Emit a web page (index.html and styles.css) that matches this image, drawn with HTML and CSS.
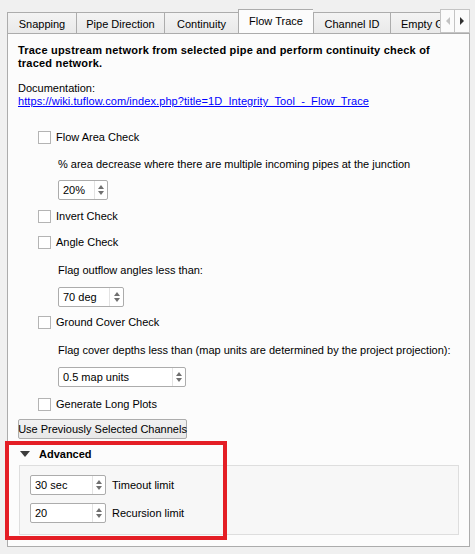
FILE: index.html
```html
<!DOCTYPE html>
<html>
<head>
<meta charset="utf-8">
<link rel="stylesheet" href="styles.css">
</head>
<body>
<div class="window">
  <div class="tabbar">
    <div class="tabs">
      <div class="tab">Snapping</div>
      <div class="tab">Pipe Direction</div>
      <div class="tab">Continuity</div>
      <div class="tab active">Flow Trace</div>
      <div class="tab">Channel ID</div>
      <div class="tab tab-last">Empty Geometry</div>
    </div>
    <div class="scroll-btns">
      <div class="sbtn"><span class="arr-left"></span></div>
      <div class="sbtn"><span class="arr-right"></span></div>
    </div>
  </div>
  <div class="panel">
    <div class="title">Trace upstream network from selected pipe and perform continuity check of traced network.</div>
    <div class="doc">
      <div>Documentation:</div>
      <a href="#">https://wiki.tuflow.com/index.php?title=1D_Integrity_Tool_-_Flow_Trace</a>
    </div>
    <div class="options">
      <div class="check mt19"><span class="box"></span><span>Flow Area Check</span></div>
      <div class="note mt10">% area decrease where there are multiple incoming pipes at the junction</div>
      <div class="spin w-pct mt9"><span class="val">20%</span><span class="btns"><span class="up"></span><span class="down"></span></span></div>
      <div class="check mt6"><span class="box"></span><span>Invert Check</span></div>
      <div class="check mt6"><span class="box"></span><span>Angle Check</span></div>
      <div class="note mt11">Flag outflow angles less than:</div>
      <div class="spin w-deg mt10"><span class="val">70 deg</span><span class="btns wide"><span class="up"></span><span class="down"></span></span></div>
      <div class="check mt5"><span class="box"></span><span>Ground Cover Check</span></div>
      <div class="note mt11">Flag cover depths less than (map units are determined by the project projection):</div>
      <div class="spin w-map mt10"><span class="val">0.5 map units</span><span class="btns"><span class="up"></span><span class="down"></span></span></div>
      <div class="check mt7"><span class="box"></span><span>Generate Long Plots</span></div>
    </div>
    <div class="button">Use Previously Selected Channels</div>
    <div class="adv-header"><span class="tri"></span><span class="adv-title">Advanced</span></div>
    <div class="group">
      <div class="limit-row">
        <div class="spin w-lim"><span class="val">30 sec</span><span class="btns"><span class="up"></span><span class="down"></span></span></div>
        <span>Timeout limit</span>
      </div>
      <div class="limit-row mt8">
        <div class="spin w-lim"><span class="val">20</span><span class="btns"><span class="up"></span><span class="down"></span></span></div>
        <span>Recursion limit</span>
      </div>
    </div>
  </div>
  <div class="highlight"></div>
</div>
</body>
</html>
```
FILE: styles.css
```css
html, body {
  margin: 0;
  padding: 0;
}
body {
  background: #f0f0f0;
  font-family: "Liberation Sans", Arial, sans-serif;
  font-size: 11px;
  line-height: 13px;
  color: #000;
  width: 475px;
  height: 554px;
  overflow: hidden;
}
.window {
  position: relative;
  padding: 9px 0 0 7px;
}
.tabbar {
  display: flex;
  height: 24px;
  width: 464px;
  position: relative;
  z-index: 2;
}
.tabs {
  display: grid;
  grid-template-columns: 69px 88px 74px 75px 77px 90px;
  align-items: end;
  width: 433px;
  overflow: hidden;
}
.tab {
  height: 21px;
  box-sizing: border-box;
  border-top: 1px solid #acacac;
  border-left: 1px solid #acacac;
  background: linear-gradient(#f3f3f3, #e9e9e9);
  display: flex;
  justify-content: center;
  align-items: center;
  padding-top: 2px;
  white-space: nowrap;
  overflow: hidden;
}
.tab-last {
  justify-content: flex-start;
  padding-left: 10px;
  border-right: 1px solid #acacac;
}
.tab.active {
  height: 25px;
  margin-bottom: -1px;
  background: #fcfcfc;
  padding-top: 0;
  padding-bottom: 2px;
}
.scroll-btns {
  display: flex;
  height: 24px;
}
.sbtn {
  width: 15px;
  height: 24px;
  box-sizing: border-box;
  border: 1px solid #c4c4c4;
  background: #fbfbfb;
  display: flex;
  align-items: center;
  justify-content: center;
}
.sbtn + .sbtn {
  border-left: none;
}
.arr-left {
  width: 0;
  height: 0;
  border-top: 4px solid transparent;
  border-bottom: 4px solid transparent;
  border-right: 4px solid #c2c2c2;
}
.arr-right {
  width: 0;
  height: 0;
  border-top: 4px solid transparent;
  border-bottom: 4px solid transparent;
  border-left: 4px solid #303030;
}
.panel {
  width: 463px;
  height: 514px;
  box-sizing: border-box;
  border: 1px solid #acacac;
  background: #fcfcfc;
  padding: 10px 11px 0 10px;
  position: relative;
  z-index: 1;
}
.title {
  font-weight: bold;
  letter-spacing: 0.2px;
  width: 436px;
}
.doc {
  margin-top: 12px;
}
.doc a {
  color: #0000ff;
  text-decoration: underline;
  letter-spacing: 0.08px;
}
.options {
  padding-left: 20px;
}
.check {
  display: flex;
  align-items: center;
  height: 20px;
  gap: 5px;
}
.box {
  width: 13px;
  height: 13px;
  box-sizing: border-box;
  border: 1px solid #b4b4b4;
  background: #fff;
}
.note {
  padding-left: 20px;
  height: 14px;
  line-height: 14px;
  white-space: nowrap;
}
.spin {
  display: flex;
  height: 20px;
  box-sizing: border-box;
  border: 1px solid #acacac;
  border-radius: 2px;
  background: #fff;
}
.options .spin {
  margin-left: 20px;
}
.w-pct { width: 50px; }
.w-deg { width: 66px; }
.w-map { width: 128px; }
.w-lim { width: 76px; }
.val {
  flex: 1;
  padding-left: 4px;
  line-height: 18px;
  white-space: nowrap;
}
.btns {
  width: 12px;
  border-left: 1px solid #e3e3e3;
  display: flex;
  flex-direction: column;
  align-items: center;
  justify-content: center;
  gap: 2px;
}
.btns.wide {
  width: 13px;
}
.up {
  width: 0;
  height: 0;
  border-left: 3px solid transparent;
  border-right: 3px solid transparent;
  border-bottom: 4px solid #707070;
}
.down {
  width: 0;
  height: 0;
  border-left: 3px solid transparent;
  border-right: 3px solid transparent;
  border-top: 4px solid #707070;
}
.mt5 { margin-top: 5px; }
.mt6 { margin-top: 6px; }
.mt7 { margin-top: 7px; }
.mt8 { margin-top: 8px; }
.mt9 { margin-top: 9px; }
.mt10 { margin-top: 10px; }
.mt11 { margin-top: 11px; }
.mt19 { margin-top: 19px; }
.button {
  margin-top: 5px;
  width: 169px;
  height: 20px;
  box-sizing: border-box;
  border: 1px solid #adadad;
  border-radius: 2px;
  background: linear-gradient(#f2f2f2, #e8e8e8);
  display: flex;
  align-items: center;
  justify-content: center;
  white-space: nowrap;
}
.adv-header {
  margin-top: 5px;
  height: 20px;
  display: flex;
  align-items: center;
  padding-left: 2px;
  gap: 9px;
}
.tri {
  width: 0;
  height: 0;
  border-left: 5px solid transparent;
  border-right: 5px solid transparent;
  border-top: 6px solid #3c3c3c;
}
.adv-title {
  font-weight: bold;
}
.group {
  margin-top: 1px;
  margin-left: 1px;
  width: 440px;
  height: 70px;
  box-sizing: border-box;
  border: 1px solid #dedede;
  background: #f7f7f7;
  padding: 9px 0 0 10px;
}
.limit-row {
  display: flex;
  align-items: center;
  gap: 6px;
}
.highlight {
  position: absolute;
  left: 5px;
  top: 441px;
  width: 222px;
  height: 99px;
  box-sizing: border-box;
  border: 4px solid #e41e25;
  z-index: 3;
}
```
